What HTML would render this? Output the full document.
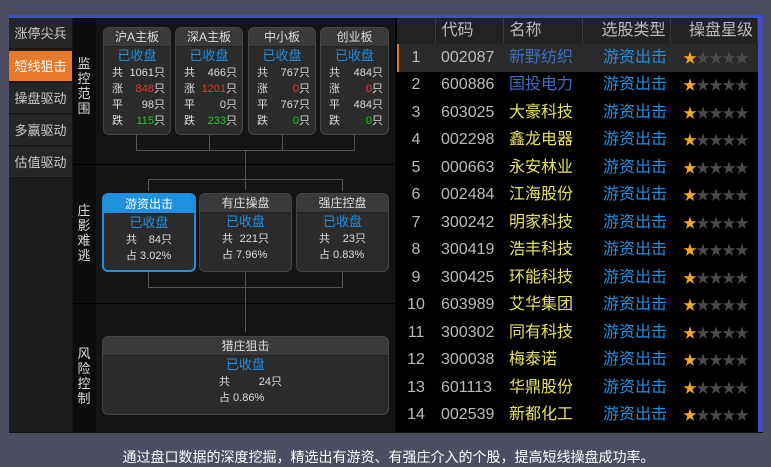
<!DOCTYPE html>
<html><head><meta charset="utf-8"><style>
*{margin:0;padding:0;box-sizing:border-box}
body{width:771px;height:465px;background:#4c4d62;font-family:"Liberation Sans","Noto Sans CJK SC",sans-serif;position:relative;overflow:hidden}
.abs{position:absolute}
#panel{left:9px;top:15px;width:754px;height:418px;background:#111;border-top:3px solid #3b4fd6}
.nav{left:9px;width:63px;height:31px;background:#262626;color:#ccc;font-size:13px;text-align:center;line-height:31px;border-bottom:1px solid #181818}
.vl{left:73px;width:22px;color:#ddd;font-size:13px;line-height:15px;text-align:center}
.box{background:#2b2b2b;border:1px solid #444;border-radius:6px;overflow:hidden;color:#ddd;font-size:11px}
.box .h{background:#3a3a3a;height:19px;line-height:19px;text-align:center;font-size:12px;color:#ddd;border-bottom:1px solid #222}
.box .s{color:#1f8fe0;text-align:center;font-size:13px;height:18px;line-height:18px}
.r{display:flex;justify-content:space-between;padding:0 5px 0 8px;height:16px;line-height:16px}
.ln{background:#555}
table{border-collapse:collapse;position:absolute;left:397px;top:18px;width:361px;font-size:16px;line-height:18px}
td{height:27.5px;color:#bbb;white-space:nowrap;padding-top:0;padding-bottom:0}
th{height:26px;line-height:26px;font-weight:normal;color:#bbb;background:#222;text-align:left;border-right:1px solid #3a3a3a;font-size:16px}
.st{color:#4a4a4a;font-size:14px;letter-spacing:-1px}.st b{color:#f5a623;font-weight:normal}
</style></head><body>
<div id="panel" class="abs"></div>
<div class="abs" style="left:72px;top:18px;width:323px;height:414px;background:#141414"></div>
<div class="abs" style="left:73px;top:18px;width:23px;height:414px;background:#0c0c0c"></div>
<div class="abs" style="left:73px;top:164px;width:322px;height:1px;background:#000"></div>
<div class="abs" style="left:73px;top:303px;width:322px;height:1px;background:#000"></div>
<div class="abs" style="left:9px;top:18px;width:63px;height:414px;background:#1c1c1c"></div>
<div class="abs nav" style="top:18px">涨停尖兵</div>
<div class="abs nav" style="top:51px;background:#e8782a;color:#fff">短线狙击</div>
<div class="abs nav" style="top:83px">操盘驱动</div>
<div class="abs nav" style="top:115px">多赢驱动</div>
<div class="abs nav" style="top:147px">估值驱动</div>
<div class="abs vl" style="top:56px">监<br>控<br>范<br>围</div>
<div class="abs vl" style="top:203px">庄<br>影<br>难<br>逃</div>
<div class="abs vl" style="top:346px">风<br>险<br>控<br>制</div>

<div class="abs ln" style="left:136px;top:135px;width:1px;height:15px"></div>
<div class="abs ln" style="left:209px;top:135px;width:1px;height:15px"></div>
<div class="abs ln" style="left:282px;top:135px;width:1px;height:15px"></div>
<div class="abs ln" style="left:354px;top:135px;width:1px;height:15px"></div>
<div class="abs ln" style="left:136px;top:150px;width:219px;height:1px"></div>
<div class="abs ln" style="left:245px;top:150px;width:1px;height:40px"></div>
<div class="abs ln" style="left:148px;top:179px;width:195px;height:1px"></div>
<div class="abs ln" style="left:148px;top:179px;width:1px;height:12px"></div>
<div class="abs ln" style="left:342px;top:179px;width:1px;height:12px"></div>
<div class="abs ln" style="left:148px;top:272px;width:1px;height:15px"></div>
<div class="abs ln" style="left:245px;top:272px;width:1px;height:60px"></div>
<div class="abs ln" style="left:342px;top:272px;width:1px;height:15px"></div>
<div class="abs ln" style="left:148px;top:287px;width:195px;height:1px"></div>

<div class="abs box" style="left:103px;top:27px;width:68px;height:108px"><div class="h">沪A主板</div><div class="s">已收盘</div><div class="r"><span>共</span><span>1061只</span></div><div class="r"><span>涨</span><span><i style="color:#e03a3a;font-style:normal">848</i>只</span></div><div class="r"><span>平</span><span>98只</span></div><div class="r"><span>跌</span><span><i style="color:#2c2;font-style:normal">115</i>只</span></div></div>
<div class="abs box" style="left:175px;top:27px;width:68px;height:108px"><div class="h">深A主板</div><div class="s">已收盘</div><div class="r"><span>共</span><span>466只</span></div><div class="r"><span>涨</span><span><i style="color:#e03a3a;font-style:normal">1201</i>只</span></div><div class="r"><span>平</span><span>0只</span></div><div class="r"><span>跌</span><span><i style="color:#2c2;font-style:normal">233</i>只</span></div></div>
<div class="abs box" style="left:248px;top:27px;width:68px;height:108px"><div class="h">中小板</div><div class="s">已收盘</div><div class="r"><span>共</span><span>767只</span></div><div class="r"><span>涨</span><span><i style="color:#e03a3a;font-style:normal">0</i>只</span></div><div class="r"><span>平</span><span>767只</span></div><div class="r"><span>跌</span><span><i style="color:#2c2;font-style:normal">0</i>只</span></div></div>
<div class="abs box" style="left:320px;top:27px;width:69px;height:108px"><div class="h">创业板</div><div class="s">已收盘</div><div class="r"><span>共</span><span>484只</span></div><div class="r"><span>涨</span><span><i style="color:#e03a3a;font-style:normal">0</i>只</span></div><div class="r"><span>平</span><span>484只</span></div><div class="r"><span>跌</span><span><i style="color:#2c2;font-style:normal">0</i>只</span></div></div>

<div class="abs box" style="left:102px;top:193px;width:94px;height:79px;border:2px solid #1f8fe0"><div class="h" style="background:#1f8fe0;color:#fff">游资出击</div><div class="s">已收盘</div><div class="r" style="padding:0 22px"><span>共</span><span>84只</span></div><div class="r" style="padding:0 22px;justify-content:flex-start"><span>占 3.02%</span></div></div>
<div class="abs box" style="left:199px;top:193px;width:93px;height:79px"><div class="h">有庄操盘</div><div class="s">已收盘</div><div class="r" style="padding:0 22px"><span>共</span><span>221只</span></div><div class="r" style="padding:0 22px;justify-content:flex-start"><span>占 7.96%</span></div></div>
<div class="abs box" style="left:296px;top:193px;width:93px;height:79px"><div class="h">强庄控盘</div><div class="s">已收盘</div><div class="r" style="padding:0 22px"><span>共</span><span>23只</span></div><div class="r" style="padding:0 22px;justify-content:flex-start"><span>占 0.83%</span></div></div>

<div class="abs box" style="left:102px;top:336px;width:287px;height:79px"><div class="h">猎庄狙击</div><div class="s">已收盘</div><div class="r" style="padding:0 106px 0 116px"><span>共</span><span>24只</span></div><div class="r" style="padding:0 0 0 116px;justify-content:flex-start"><span>占 0.86%</span></div></div>

<div class="abs" style="left:395px;top:18px;width:367px;height:414px;background:#000"></div>
<div class="abs" style="left:758px;top:18px;width:5px;height:414px;background:#4a4ab8"></div>
<table>
<tr><th style="width:38px"></th><th style="width:68px;padding-left:6px">代码</th><th style="width:79px;padding-left:6px">名称</th><th style="width:88px;text-align:right;padding-right:4px">选股类型</th><th style="text-align:right;padding-right:4px">操盘星级</th></tr>
<tr style="background:#2a2a2a;box-shadow:inset 2px 0 #e8782a"><td style="text-align:center">1</td><td style="padding-left:6px">002087</td><td style="padding-left:6px;color:#3d6fc4">新野纺织</td><td style="padding-left:21px;color:#1f8fe0">游资出击</td><td style="padding-left:13px" class="st"><b>★</b>★★★★</td></tr>
<tr><td style="text-align:center">2</td><td style="padding-left:6px">600886</td><td style="padding-left:6px;color:#3d6fc4">国投电力</td><td style="padding-left:21px;color:#1f8fe0">游资出击</td><td style="padding-left:13px" class="st"><b>★</b>★★★★</td></tr>
<tr><td style="text-align:center">3</td><td style="padding-left:6px">603025</td><td style="padding-left:6px;color:#e8e060">大豪科技</td><td style="padding-left:21px;color:#1f8fe0">游资出击</td><td style="padding-left:13px" class="st"><b>★</b>★★★★</td></tr>
<tr><td style="text-align:center">4</td><td style="padding-left:6px">002298</td><td style="padding-left:6px;color:#e8e060">鑫龙电器</td><td style="padding-left:21px;color:#1f8fe0">游资出击</td><td style="padding-left:13px" class="st"><b>★</b>★★★★</td></tr>
<tr><td style="text-align:center">5</td><td style="padding-left:6px">000663</td><td style="padding-left:6px;color:#e8e060">永安林业</td><td style="padding-left:21px;color:#1f8fe0">游资出击</td><td style="padding-left:13px" class="st"><b>★</b>★★★★</td></tr>
<tr><td style="text-align:center">6</td><td style="padding-left:6px">002484</td><td style="padding-left:6px;color:#e8e060">江海股份</td><td style="padding-left:21px;color:#1f8fe0">游资出击</td><td style="padding-left:13px" class="st"><b>★</b>★★★★</td></tr>
<tr><td style="text-align:center">7</td><td style="padding-left:6px">300242</td><td style="padding-left:6px;color:#e8e060">明家科技</td><td style="padding-left:21px;color:#1f8fe0">游资出击</td><td style="padding-left:13px" class="st"><b>★</b>★★★★</td></tr>
<tr><td style="text-align:center">8</td><td style="padding-left:6px">300419</td><td style="padding-left:6px;color:#e8e060">浩丰科技</td><td style="padding-left:21px;color:#1f8fe0">游资出击</td><td style="padding-left:13px" class="st"><b>★</b>★★★★</td></tr>
<tr><td style="text-align:center">9</td><td style="padding-left:6px">300425</td><td style="padding-left:6px;color:#e8e060">环能科技</td><td style="padding-left:21px;color:#1f8fe0">游资出击</td><td style="padding-left:13px" class="st"><b>★</b>★★★★</td></tr>
<tr><td style="text-align:center">10</td><td style="padding-left:6px">603989</td><td style="padding-left:6px;color:#e8e060">艾华集团</td><td style="padding-left:21px;color:#1f8fe0">游资出击</td><td style="padding-left:13px" class="st"><b>★</b>★★★★</td></tr>
<tr><td style="text-align:center">11</td><td style="padding-left:6px">300302</td><td style="padding-left:6px;color:#e8e060">同有科技</td><td style="padding-left:21px;color:#1f8fe0">游资出击</td><td style="padding-left:13px" class="st"><b>★</b>★★★★</td></tr>
<tr><td style="text-align:center">12</td><td style="padding-left:6px">300038</td><td style="padding-left:6px;color:#e8e060">梅泰诺</td><td style="padding-left:21px;color:#1f8fe0">游资出击</td><td style="padding-left:13px" class="st"><b>★</b>★★★★</td></tr>
<tr><td style="text-align:center">13</td><td style="padding-left:6px">601113</td><td style="padding-left:6px;color:#e8e060">华鼎股份</td><td style="padding-left:21px;color:#1f8fe0">游资出击</td><td style="padding-left:13px" class="st"><b>★</b>★★★★</td></tr>
<tr><td style="text-align:center">14</td><td style="padding-left:6px">002539</td><td style="padding-left:6px;color:#e8e060">新都化工</td><td style="padding-left:21px;color:#1f8fe0">游资出击</td><td style="padding-left:13px" class="st"><b>★</b>★★★★</td></tr>
</table>
<div class="abs" style="left:0;top:447px;width:771px;text-align:center;color:#fff;font-size:14px;padding-left:6px">通过盘口数据的深度挖掘，精选出有游资、有强庄介入的个股，提高短线操盘成功率。</div>
</body></html>
